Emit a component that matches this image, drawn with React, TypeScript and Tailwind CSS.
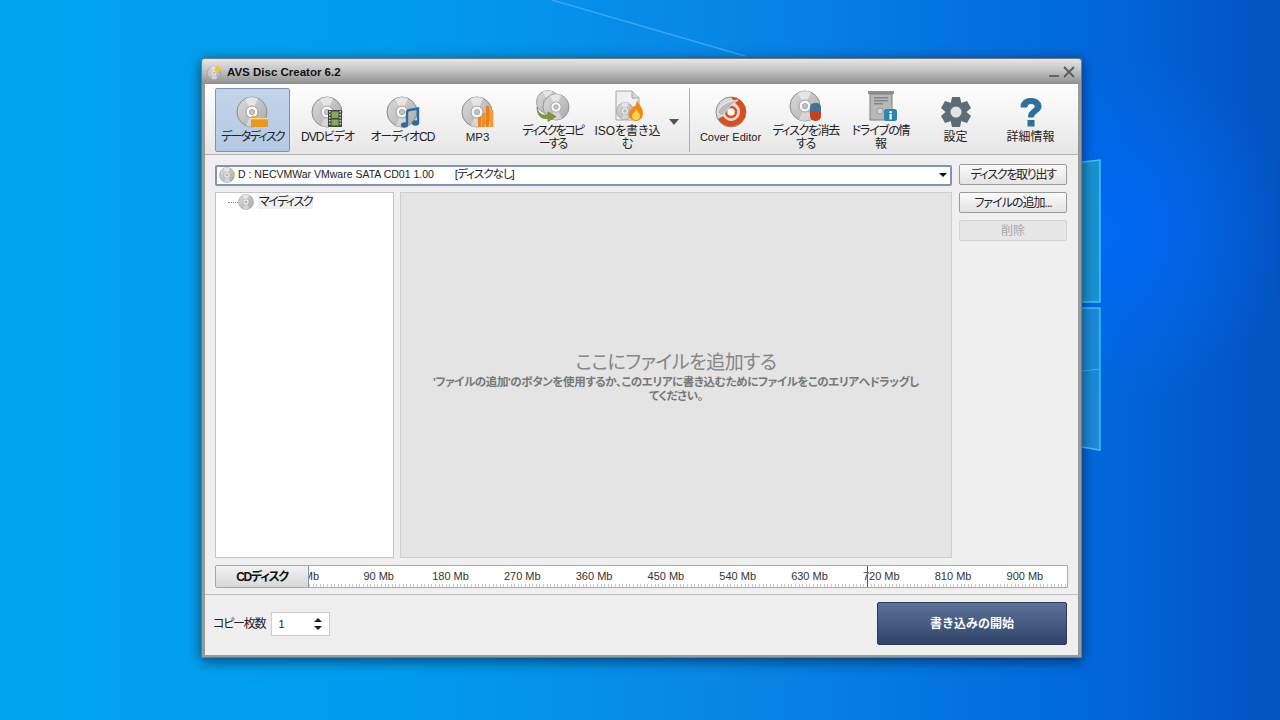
import React from 'react';

// Shared disc drawing, 32x32 box
const DiscBase: React.FC<{ cx?: number; cy?: number; r?: number }> = ({ cx = 16, cy = 16, r = 15 }) => {
    const k = r / 15;
    return (
        <g transform={`translate(${cx} ${cy}) scale(${k})`}>
            <circle r="15" fill="url(#discFill)" stroke="#8c8c8c" strokeWidth="1" />
            <path d="M0 0 L-7 -13 A15 15 0 0 1 6 -13.7 Z" fill="#f1f1f1" opacity="0.7" />
            <path d="M0 0 L7 13 A15 15 0 0 1 -6 13.7 Z" fill="#ececec" opacity="0.55" />
            <circle r="6" fill="#f7f7f7" stroke="#a0a0a0" strokeWidth="1" />
            <circle r="2.6" fill="#c4c4c4" stroke="#8f8f8f" strokeWidth="0.7" />
        </g>
    );
};

const Icon: React.FC<{ children: React.ReactNode }> = ({ children }) => (
    <svg viewBox="0 0 34 32" className="w-[34px] h-[32px] shrink-0">
        {children}
    </svg>
);

const DataIcon = () => (
    <Icon>
        <DiscBase />
        <path d="M15 20 h6 l2 2 h9 v9 h-17 z" fill="#f2ae38" />
        <path d="M15 24 h17 v7 h-17 z" fill="#e99a1e" />
        <path d="M15 22.5 h17" stroke="#fbd98a" strokeWidth="1" />
    </Icon>
);

const DvdIcon = () => (
    <Icon>
        <DiscBase />
        <rect x="17" y="14" width="14" height="17" fill="#3c4a38" />
        <rect x="20.5" y="15.5" width="7" height="6.5" fill="#8ca660" />
        <rect x="20.5" y="23.5" width="7" height="6" fill="#8ca660" />
        {[15, 18, 21, 24, 27].map(y => (
            <g key={y}>
                <rect x="18" y={y} width="1.5" height="1.5" fill="#d8d8d8" />
                <rect x="28.5" y={y} width="1.5" height="1.5" fill="#d8d8d8" />
            </g>
        ))}
    </Icon>
);

const AudioIcon = () => (
    <Icon>
        <DiscBase />
        <path d="M21 14.5 L32 12.5 V27" fill="none" stroke="#2d6c9c" strokeWidth="2.4" />
        <path d="M21 14.5 V29" fill="none" stroke="#2d6c9c" strokeWidth="2.4" />
        <ellipse cx="18.5" cy="29" rx="3.6" ry="2.7" fill="#2d6c9c" />
        <ellipse cx="29.5" cy="27" rx="3.6" ry="2.7" fill="#2d6c9c" />
    </Icon>
);

const Mp3Icon = () => (
    <Icon>
        <DiscBase />
        <rect x="17" y="21" width="3.4" height="10" fill="#e88422" />
        <rect x="21" y="17" width="3.4" height="14" fill="#ee8f28" />
        <rect x="25" y="10" width="3.4" height="21" fill="#e87e18" />
        <rect x="29" y="14" width="3.4" height="17" fill="#f09a38" />
    </Icon>
);

const CopyIcon = () => (
    <Icon>
        <DiscBase cx={12} cy={12} r={11.5} />
        <DiscBase cx={20} cy={17} r={13} />
        <path d="M1 17 C2 24 7 26 12 25 V22 L20 26.5 L12 31.5 V28.5 C6 29.5 1 26 1 17 Z" fill="#7d9a36" stroke="#5c7626" strokeWidth="0.6" />
    </Icon>
);

const IsoIcon = () => (
    <Icon>
        <path d="M5 1 H21 L28 8 V30 H5 Z" fill="#f1f1f1" stroke="#a4a4a4" />
        <path d="M21 1 V8 H28" fill="#d8d8d8" stroke="#a4a4a4" />
        <DiscBase cx={14} cy={21} r={8.5} />
        <path d="M26 10 C27 14 32 17 32 23 C32 28 29 31 25 31 C21 31 18 28 18 24 C18 20 21 20 22 16 C24 18 25 15 26 10 Z" fill="#f08a14" />
        <path d="M25.5 19 C26 22 29 23 29 26 C29 29 27 30 25 30 C23 30 21 29 21 26 C21 23 24 23 25.5 19 Z" fill="#ffd24a" />
    </Icon>
);

const CoverIcon = () => (
    <Icon>
        <circle cx="17" cy="16" r="15" fill="#d9d9d9" stroke="#8c8c8c" />
        <path d="M17 1 A15 15 0 0 1 32 16 A15 15 0 0 1 4 23 L9 20 A9 9 0 0 0 26 16 A9 9 0 0 0 22 8 Z" fill="#d9501e" />
        <circle cx="17" cy="16" r="5" fill="#fafafa" stroke="#d9501e" strokeWidth="2.5" />
        <path d="M3 17 C6 9 14 5 24 4 C18 9 13 12 9 20 Z" fill="#bcbcbc" stroke="#f5f5f5" strokeWidth="0.8" />
    </Icon>
);

const EraseIcon = () => (
    <Icon>
        <DiscBase />
        <rect x="21" y="13" width="11" height="18" rx="5" fill="#c8401c" />
        <path d="M21 22 V18 A5.5 5 0 0 1 32 18 V22 Z" fill="#3d7396" />
    </Icon>
);

const DriveIcon = () => (
    <Icon>
        <rect x="4" y="1" width="26" height="3" fill="#8f8f8f" />
        <rect x="6" y="4" width="22" height="26" fill="#b8b8b8" stroke="#808080" />
        <rect x="10" y="7" width="14" height="1.5" fill="#868686" />
        <rect x="10" y="10" width="14" height="1.5" fill="#868686" />
        <rect x="10" y="13" width="9" height="1.5" fill="#868686" />
        <circle cx="16" cy="21" r="3" fill="#d8d8d8" stroke="#999" />
        <rect x="20" y="19" width="13" height="12" rx="2.5" fill="#2a85b4" />
        <rect x="25.5" y="21" width="2.2" height="2.2" fill="#fff" />
        <rect x="25.5" y="24" width="2.2" height="5.5" fill="#fff" />
    </Icon>
);

const GearIcon = () => (
    <Icon>
        <g transform="translate(17 16)" fill="#5f6c78">
            {[0, 60, 120, 180, 240, 300].map(a => (
                <path key={a} d="M-4 -15 H4 L5.5 -8 H-5.5 Z" transform={`rotate(${a})`} />
            ))}
            <circle r="10.5" />
            <circle r="5.5" fill="#e3e3e3" />
        </g>
    </Icon>
);

const HelpIcon = () => (
    <Icon>
        <path d="M7 11 C7 5 11.5 2.5 17 2.5 C23 2.5 27 5.5 27 10.5 C27 16 20.5 16.5 19.5 21 H14.5 C14.5 14 21 13.5 21 10.5 C21 8.5 19.5 7.5 17 7.5 C14.5 7.5 13 9 13 11 Z" fill="#2f6f9f" stroke="#2f6f9f" strokeWidth="1" />
        <rect x="13.5" y="24" width="7" height="6.5" fill="#2f6f9f" />
    </Icon>
);

const tools = [
    { label: 'データディスク', icon: <DataIcon />, active: true, cls: 'text-[12px] tracking-[-1.7px]' },
    { label: 'DVDビデオ', icon: <DvdIcon />, cls: 'text-[12px] tracking-[-0.9px]' },
    { label: 'オーディオCD', icon: <AudioIcon />, cls: 'text-[12px] tracking-[-1px]' },
    { label: 'MP3', icon: <Mp3Icon />, cls: 'text-[11.5px]' },
    { label: 'ディスクをコピ\nーする', icon: <CopyIcon />, cls: 'text-[12px] tracking-[-2px]' },
    { label: 'ISOを書き込\nむ', icon: <IsoIcon />, cls: 'text-[12px]' },
];

const tools2 = [
    { label: 'Cover Editor', icon: <CoverIcon />, cls: 'text-[11px]' },
    { label: 'ディスクを消去\nする', icon: <EraseIcon />, cls: 'text-[12px] tracking-[-1.4px]' },
    { label: 'ドライブの情\n報', icon: <DriveIcon />, cls: 'text-[12px] tracking-[-1.1px]' },
    { label: '設定', icon: <GearIcon />, cls: 'text-[12px]' },
    { label: '詳細情報', icon: <HelpIcon />, cls: 'text-[12px]' },
];

const ToolButton: React.FC<{ label: string; icon: React.ReactNode; active?: boolean; cls: string }> = ({ label, icon, active, cls }) => (
    <div
        className={`w-[75px] h-[64px] shrink-0 flex flex-col items-center justify-center rounded-[2px] ${
            active ? 'bg-[linear-gradient(#c3d4ea,#b4c9e4)] border border-[#7f93ad]' : ''
        }`}
    >
        {icon}
        <span className={`mt-[3px] leading-[13px] text-[#222] text-center whitespace-pre [font-feature-settings:'palt'] ${cls}`}>
            {label}
        </span>
    </div>
);

const SideButton: React.FC<{ children: React.ReactNode; disabled?: boolean; cls?: string }> = ({ children, disabled, cls }) => (
    <div
        className={`h-[21px] flex items-center justify-center rounded-[2px] border text-[12px] [font-feature-settings:'palt'] ${cls ?? ''} ${
            disabled
                ? 'border-[#d4d4d4] bg-[#e6e6e6] text-[#a8a8a8]'
                : 'border-[#9a9a9a] bg-[linear-gradient(#fafafa,#e4e4e4)] text-[#222]'
        }`}
    >
        {children}
    </div>
);

const rulerLabels = ['0 Mb', '90 Mb', '180 Mb', '270 Mb', '360 Mb', '450 Mb', '540 Mb', '630 Mb', '720 Mb', '810 Mb', '900 Mb'];

export default function App() {
    return (
        <div className="relative w-[1280px] h-[720px] overflow-hidden [font-family:'Liberation_Sans','Noto_Sans_CJK_JP',sans-serif] bg-[radial-gradient(circle_at_1110px_230px,#0068f4_0,rgba(0,104,244,0)_180px),linear-gradient(90deg,#00a3ee_0%,#009cee_30%,#0888e6_55%,#0068dc_85%,#0452c0_100%)]">
            {/* Shared gradients */}
            <svg className="absolute w-0 h-0">
                <defs>
                    <linearGradient id="discFill" x1="0" y1="0" x2="1" y2="1">
                        <stop offset="0" stopColor="#dcdcdc" />
                        <stop offset="1" stopColor="#a9a9a9" />
                    </linearGradient>
                </defs>
            </svg>

            {/* Wallpaper */}
            <svg className="absolute inset-0 w-[1280px] h-[720px]" viewBox="0 0 1280 720">
                <line x1="552" y1="0" x2="745" y2="56" stroke="#3aa4f2" strokeWidth="1.5" />
                <path d="M1082 162 L1100 160 V302 H1082 Z" fill="#1a92d2" />
                <path d="M1082 162 L1100 160 V302 H1082" fill="none" stroke="#40c6ee" strokeWidth="1.5" />
                <path d="M1082 308 H1100 V450 L1082 447 Z" fill="#1b8ad8" />
                <path d="M1082 308 H1100 V450 L1082 447" fill="none" stroke="#40c0ee" strokeWidth="1.5" />
                <path d="M1082 371 L1100 369" stroke="#40b0e8" strokeWidth="1" />
            </svg>

            {/* App window */}
            <div className="absolute left-[201px] top-[58px] w-[881px] h-[600px] flex flex-col rounded-t-[3px] bg-[#9a9a9a] border border-[#777] shadow-[0_3px_14px_rgba(0,0,0,0.55)]">
                <div className="h-[25px] shrink-0 flex items-center rounded-t-[3px] bg-[linear-gradient(#e6e6e6_0%,#c8c8c8_40%,#8f8f8f_100%)]">
                    <svg viewBox="0 0 18 18" className="w-[16px] h-[16px] ml-[5px] shrink-0">
                        <DiscBase cx={8} cy={10} r={7.5} />
                        <path d="M12 1 L13.3 4.2 L16.8 4.5 L14.1 6.7 L15 10 L12 8.2 L9 10 L9.9 6.7 L7.2 4.5 L10.7 4.2 Z" fill="#f5c518" />
                    </svg>
                    <span className="ml-[4px] pt-[2px] text-[11.5px] font-bold text-[#111]">AVS Disc Creator 6.2</span>
                    <div className="ml-auto mr-[6px] flex items-center gap-[4px]">
                        <div className="w-[10px] h-[2px] bg-[#666] mt-[9px]" />
                        <svg viewBox="0 0 12 12" className="w-[12px] h-[12px]">
                            <path d="M1 1 L11 11 M11 1 L1 11" stroke="#5a5a5a" strokeWidth="1.8" />
                        </svg>
                    </div>
                </div>

                <div className="flex-1 mx-[3px] mb-[2px] flex flex-col bg-[#efefef]">
                    {/* Toolbar */}
                    <div className="h-[71px] shrink-0 flex items-start pl-[10px] pt-[4px] border-b border-[#b4b4b4] bg-[linear-gradient(#ffffff,#e6e6e6)]">
                        {tools.map(t => (
                            <ToolButton key={t.label} {...t} />
                        ))}
                        <div className="w-[24px] h-[64px] shrink-0 flex items-center justify-center pt-[4px] pr-[6px]">
                            <div className="w-0 h-0 border-x-[5px] border-x-transparent border-t-[6px] border-t-[#555]" />
                        </div>
                        <div className="w-px h-[64px] shrink-0 bg-[#b0b0b0] mr-[3px]" />
                        {tools2.map(t => (
                            <ToolButton key={t.label} {...t} />
                        ))}
                    </div>

                    {/* Work area */}
                    <div className="flex gap-[7px] pl-[10px] pr-[11px] pt-[10px]">
                        <div className="w-[737px] shrink-0 flex flex-col gap-[6px]">
                            <div className="h-[21px] flex items-center rounded-[2px] border-2 border-[#8294b4] bg-white pb-[1px]">
                                <svg viewBox="0 0 32 32" className="w-[16px] h-[16px] ml-[2px] shrink-0">
                                    <DiscBase cx={16} cy={16} />
                                </svg>
                                <span className="ml-[3px] text-[10.5px] text-[#222] whitespace-pre [font-feature-settings:'palt']">D : NECVMWar VMware SATA CD01 1.00</span>
                                <span className="ml-[21px] text-[11.5px] tracking-[-1px] text-[#222] [font-feature-settings:'palt']">[ディスクなし]</span>
                                <div className="ml-auto mr-[3px] w-0 h-0 border-x-[4px] border-x-transparent border-t-[4px] border-t-[#111]" />
                            </div>
                            <div className="flex gap-[6px] h-[366px]">
                                <div className="w-[179px] shrink-0 bg-white border border-[#c4c4c4] pt-[1px] pl-[12px]">
                                    <div className="flex items-center">
                                        <div className="w-[10px] border-t border-dotted border-[#888]" />
                                        <svg viewBox="0 0 32 32" className="w-[16px] h-[16px] shrink-0">
                                            <DiscBase cx={16} cy={16} />
                                        </svg>
                                        <span className="ml-[4px] px-[1px] bg-[#f0f0f0] text-[12px] tracking-[-1.6px] leading-[14px] text-[#222] [font-feature-settings:'palt']">マイディスク</span>
                                    </div>
                                </div>
                                <div className="flex-1 flex flex-col items-center justify-center pt-[3px] bg-[#e4e4e4] border border-[#cfcfcf] text-center [font-feature-settings:'palt']">
                                    <div className="text-[19px] tracking-[-0.5px] leading-[24px] text-[#858585]">ここにファイルを追加する</div>
                                    <div className="text-[11.5px] tracking-[-0.4px] leading-[14px] font-bold text-[#777]">
                                        'ファイルの追加'のボタンを使用するか、このエリアに書き込むためにファイルをこのエリアへドラッグし
                                        <br />
                                        てください。
                                    </div>
                                </div>
                            </div>
                        </div>
                        <div className="flex-1 flex flex-col gap-[7px] -mt-[1px]">
                            <SideButton cls="tracking-[-1.3px]">ディスクを取り出す</SideButton>
                            <SideButton cls="tracking-[-1px]">ファイルの追加...</SideButton>
                            <SideButton disabled>削除</SideButton>
                        </div>
                    </div>

                    {/* Capacity ruler */}
                    <div className="ml-[10px] mr-[10px] mt-[7px] h-[23px] flex border border-[#a8a8a8] rounded-l-[2px]">
                        <div className="w-[93px] shrink-0 flex items-center justify-center bg-[linear-gradient(#f2f2f2,#d8d8d8)] border-r border-[#8294b4] text-[12px] tracking-[-1.3px] font-bold text-[#111] [font-feature-settings:'palt']">
                            CDディスク
                        </div>
                        <div className="relative flex-1 bg-white overflow-hidden">
                            <div className="flex -ml-[38px] pt-[3px]">
                                {rulerLabels.map(l => (
                                    <span key={l} className="w-[71.8px] shrink-0 text-center text-[11px] leading-[14px] text-[#333]">
                                        {l}
                                    </span>
                                ))}
                            </div>
                            <div className="absolute left-0 right-0 bottom-0 h-[3px] bg-[repeating-linear-gradient(90deg,#c8c8c8_0,#c8c8c8_1px,transparent_1px,transparent_3.6px)]" />
                            <div className="absolute left-[558px] top-0 bottom-0 w-px bg-[#ff1020]" />
                        </div>
                    </div>

                    <div className="mt-[6px] border-t border-[#bdbdbd]" />

                    {/* Footer */}
                    <div className="flex-1 flex items-center pl-[8px] pr-[11px] pb-[2px]">
                        <span className="text-[12px] tracking-[-1.2px] text-[#222] [font-feature-settings:'palt']">コピー枚数</span>
                        <div className="ml-[6px] w-[59px] h-[24px] flex items-center justify-between bg-white border border-[#cdcdcd] pl-[6px] pr-[7px]">
                            <span className="text-[11px] text-[#222]">1</span>
                            <div className="flex flex-col gap-[4px]">
                                <div className="w-0 h-0 border-x-[4px] border-x-transparent border-b-[4px] border-b-[#222]" />
                                <div className="w-0 h-0 border-x-[4px] border-x-transparent border-t-[4px] border-t-[#222]" />
                            </div>
                        </div>
                        <div className="ml-auto w-[190px] h-[43px] mb-[1px] pt-[1px] flex items-center justify-center rounded-[2px] border border-[#2a3a58] bg-[linear-gradient(#5d7297,#2f4468)] text-white text-[12px] font-bold">
                            書き込みの開始
                        </div>
                    </div>
                </div>
            </div>
        </div>
    );
}
